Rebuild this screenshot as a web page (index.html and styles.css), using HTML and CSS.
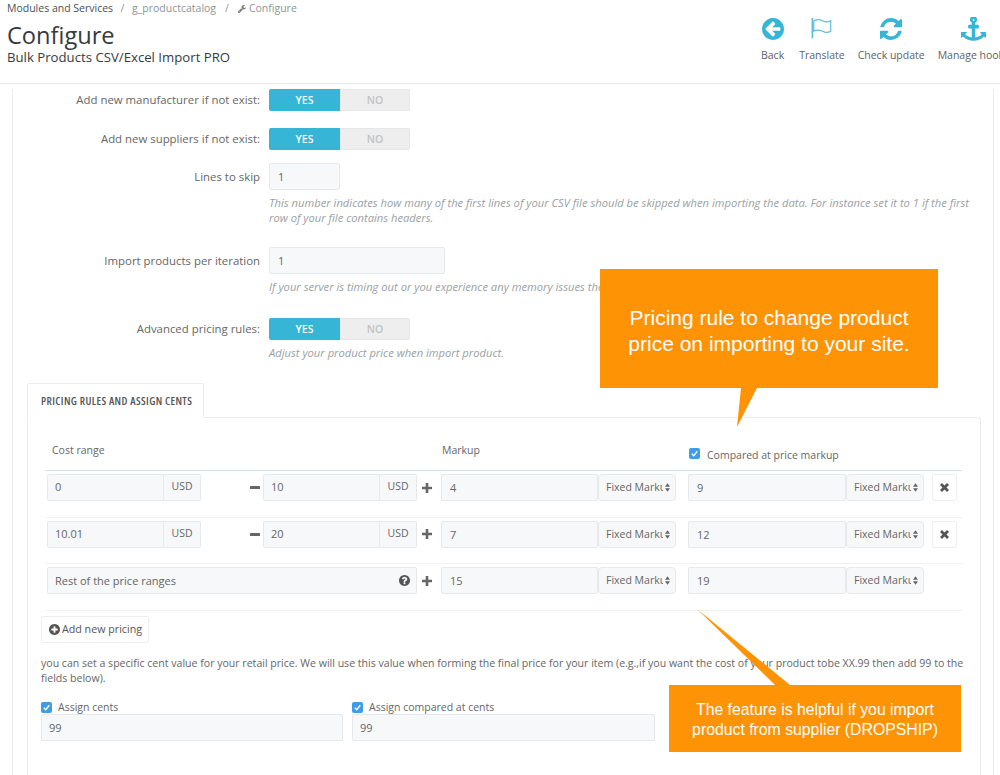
FILE: index.html
```html
<!DOCTYPE html>
<html lang="en">
<head>
<meta charset="utf-8">
<title>Configure</title>
<link rel="stylesheet" href="styles.css">
</head>
<body>
<svg class="defs" width="0" height="0" aria-hidden="true">
  <defs>
    <symbol id="i-back" viewBox="128 128 1536 1536"><path d="M1408 960v-128q0-26-18.500-45t-45.500-19h-502l189-189q19-19 19-45t-19-45l-91-91q-18-18-45-18t-45 18l-362 362-91 91q-18 18-18 45t18 45l91 91 362 362q18 18 45 18t45-18l91-91q18-18 18-45t-18-45l-189-189h502q26 0 45-19t19-45zm256-64q0 209-103 385.500t-279.500 279.500-385.500 103-385.500-103-279.500-279.500-103-385.500 103-385.500 279.500-279.500 385.500-103 385.500 103 279.500 279.500 103 385.500z"/></symbol>
    <symbol id="i-refresh" viewBox="128 128 1536 1536"><path d="M1639 1056q0 5-1 7-64 268-268 434.500t-478 166.500q-146 0-282.500-55t-243.500-157l-129 129q-19 19-45 19t-45-19-19-45v-448q0-26 19-45t45-19h448q26 0 45 19t19 45-19 45l-137 137q71 66 161 102t187 36q134 0 250-65t186-179q11-17 53-117 8-23 30-23h192q13 0 22.500 9.500t9.500 22.500zm25-800v448q0 26-19 45t-45 19h-448q-26 0-45-19t-19-45 19-45l138-138q-148-137-349-137-134 0-250 65t-186 179q-11 17-53 117-8 23-30 23h-199q-13 0-22.500-9.500t-9.500-22.500v-7q65-268 270-434.500t480-166.500q146 0 284 55.500t245 156.500l130-129q19-19 45-19t45 19 19 45z"/></symbol>
    <symbol id="i-anchor" viewBox="0 128 1792 1536"><path d="M960 256q0-26-19-45t-45-19-45 19-19 45 19 45 45 19 45-19 19-45zm832 888v352q0 22-20 30-8 2-12 2-12 0-23-9l-93-93q-119 143-318.500 226.500t-429.500 83.500-429.500-83.500-318.500-226.500l-93 93q-9 9-23 9-4 0-12-2-20-8-20-30v-352q0-14 9-23t23-9h352q22 0 30 20 8 19-7 35l-100 100q67 91 189.500 153.500t271.500 82.500v-647h-192q-26 0-45-19t-19-45v-128q0-26 19-45t45-19h192v-163q-58-34-93-92.500t-35-128.500q0-106 75-181t181-75 181 75 75 181q0 70-35 128.500t-93 92.500v163h192q26 0 45 19t19 45v128q0 26-19 45t-45 19h-192v647q149-20 271.500-82.500t189.500-153.500l-100-100q-15-16-7-35 8-20 30-20h352q14 0 23 9t9 23z"/></symbol>
    <symbol id="i-wrench" viewBox="128 128 1600 1600"><path d="M448 1472q0-26-19-45t-45-19-45 19-19 45 19 45 45 19 45-19 19-45zm644-420l-682 682q-37 37-90 37-52 0-91-37l-106-108q-38-36-38-90 0-53 38-91l681-681q39 98 114.500 173.500t173.500 114.500zm634-435q0 39-23 106-47 134-164.500 217.500t-258.500 83.500q-185 0-316.500-131.500t-131.500-316.500 131.500-316.500 316.500-131.500q58 0 121.500 16.500t107.500 46.500q16 11 16 28t-16 28l-293 169v224l193 107q5-3 79-48.500t135.500-81 70.500-35.500q15 0 23.500 10t8.500 25z"/></symbol>
    <symbol id="i-help" viewBox="128 128 1536 1536"><path d="M1024 1376v-192q0-14-9-23t-23-9h-192q-14 0-23 9t-9 23v192q0 14 9 23t23 9h192q14 0 23-9t9-23zm256-672q0-88-55.500-163t-138.500-116-170-41q-243 0-371 213-15 24 8 42l132 100q7 6 19 6 16 0 25-12 53-68 86-92 34-24 86-24 48 0 85.500 26t37.500 59q0 38-20 61t-68 45q-63 28-115.500 86.500t-52.500 125.500v36q0 14 9 23t23 9h192q14 0 23-9t9-23q0-19 21.500-49.500t54.500-49.500q32-18 49-28.500t46-35 44.500-48 28-60.500 12.500-81zm384 192q0 209-103 385.500t-279.500 279.500-385.500 103-385.500-103-279.500-279.500-103-385.500 103-385.500 279.500-279.500 385.500-103 385.500 103 279.500 279.500 103 385.500z"/></symbol>
    <symbol id="i-add" viewBox="128 128 1536 1536"><path d="M1344 960v-128q0-26-19-45t-45-19h-256v-256q0-26-19-45t-45-19h-128q-26 0-45 19t-19 45v256h-256q-26 0-45 19t-19 45v128q0 26 19 45t45 19h256v256q0 26 19 45t45 19h128q26 0 45-19t19-45v-256h256q26 0 45-19t19-45zm320-64q0 209-103 385.500t-279.500 279.500-385.500 103-385.500-103-279.500-279.500-103-385.500 103-385.500 279.500-279.500 385.500-103 385.500 103 279.500 279.500 103 385.500z"/></symbol>
    <symbol id="i-plus" viewBox="0 0 10 10"><path d="M3.700 0h2.600v3.700H10v2.600H6.300V10H3.700V6.300H0V3.700h3.700z"/></symbol>
    <symbol id="i-minus" viewBox="0 0 10 3"><rect width="10" height="3" rx=".5"/></symbol>
    <symbol id="i-times" viewBox="0 0 10 10"><path d="M2.200 0 5 2.800 7.800 0 10 2.200 7.200 5 10 7.800 7.800 10 5 7.200 2.200 10 0 7.800 2.800 5 0 2.200z"/></symbol>
    <symbol id="i-sort" viewBox="0 0 6 10"><path d="M3 0 6 4H0zM3 10 0 6h6z"/></symbol>
    <symbol id="i-check" viewBox="0 0 11 11"><rect width="11" height="11" rx="2" fill="#3f9ce8"/><path d="M2.800 5.700 4.800 7.700 8.300 3.300" fill="none" stroke="#fff" stroke-width="1.400"/></symbol>
  </defs>
</svg>

<header class="page-head">
  <div class="head-left">
    <nav class="crumbs">
      <span class="crumb-root">Modules and Services</span>
      <span>/</span>
      <span>g_productcatalog</span>
      <span class="crumb-sep-2">/</span>
      <span class="crumb-now"><svg class="ic-wrench"><use href="#i-wrench"/></svg>Configure</span>
    </nav>
    <h1 class="title">Configure</h1>
    <h2 class="subtitle">Bulk Products CSV/Excel Import PRO</h2>
  </div>
  <div class="toolbar">
    <a class="tool tool-back"><svg class="tool-ic"><use href="#i-back"/></svg><span>Back</span></a>
    <a class="tool"><svg class="tool-ic flag" viewBox="0 0 24 24"><path d="M1.500 0v22" stroke-width="1.800"/><path d="M3 3c3.500-2 6.500-1.500 9.500 0s6 1.800 9 0v11.500c-3 1.800-6 1.500-9 0s-6-2-9.500 0z" stroke-width="1.300"/></svg><span>Translate</span></a>
    <a class="tool"><svg class="tool-ic"><use href="#i-refresh"/></svg><span>Check update</span></a>
    <a class="tool"><svg class="tool-ic anchor"><use href="#i-anchor"/></svg><span>Manage hooks</span></a>
  </div>
</header>

<main class="panel">
  <div class="form-row sw-first">
    <label class="form-label">Add new manufacturer if not exist:</label>
    <div class="switch"><span class="on">YES</span><span class="off">NO</span></div>
  </div>
  <div class="form-row sw-next">
    <label class="form-label">Add new suppliers if not exist:</label>
    <div class="switch"><span class="on">YES</span><span class="off">NO</span></div>
  </div>
  <div class="form-row lines-row">
    <label class="form-label">Lines to skip</label>
    <div>
      <div class="field small">1</div>
      <p class="help">This number indicates how many of the first lines of your CSV file should be skipped when importing the data. For instance set it to 1 if the first row of your file contains headers.</p>
    </div>
  </div>
  <div class="form-row iter-row">
    <label class="form-label">Import products per iteration</label>
    <div>
      <div class="field medium">1</div>
      <p class="help">If your server is timing out or you experience any memory issues then lower this number.</p>
    </div>
  </div>
  <div class="form-row adv-row">
    <label class="form-label">Advanced pricing rules:</label>
    <div>
      <div class="switch"><span class="on">YES</span><span class="off">NO</span></div>
      <p class="help">Adjust your product price when import product.</p>
    </div>
  </div>

  <section class="tabs">
    <div class="tab">PRICING RULES AND ASSIGN CENTS</div>
    <div class="pane">
      <div class="rule-head">
        <span class="col-cost">Cost range</span>
        <span class="col-markup">Markup</span>
        <span class="col-compare"><svg class="check"><use href="#i-check"/></svg>Compared at price markup</span>
      </div>

      <div class="rule">
        <div class="group"><div class="g-val">0</div><div class="g-add">USD</div></div>
        <span class="op op-minus"><svg class="ic-minus"><use href="#i-minus"/></svg></span>
        <div class="group"><div class="g-val">10</div><div class="g-add">USD</div></div>
        <span class="op"><svg class="ic-plus"><use href="#i-plus"/></svg></span>
        <div class="field rate">4</div>
        <div class="pick"><span class="pick-text">Fixed Markup</span><svg class="ic-sort"><use href="#i-sort"/></svg></div>
        <div class="field rate rate2">9</div>
        <div class="pick"><span class="pick-text">Fixed Markup</span><svg class="ic-sort"><use href="#i-sort"/></svg></div>
        <button class="del"><svg class="ic-times"><use href="#i-times"/></svg></button>
      </div>

      <div class="rule">
        <div class="group"><div class="g-val">10.01</div><div class="g-add">USD</div></div>
        <span class="op op-minus"><svg class="ic-minus"><use href="#i-minus"/></svg></span>
        <div class="group"><div class="g-val">20</div><div class="g-add">USD</div></div>
        <span class="op"><svg class="ic-plus"><use href="#i-plus"/></svg></span>
        <div class="field rate">7</div>
        <div class="pick"><span class="pick-text">Fixed Markup</span><svg class="ic-sort"><use href="#i-sort"/></svg></div>
        <div class="field rate rate2">12</div>
        <div class="pick"><span class="pick-text">Fixed Markup</span><svg class="ic-sort"><use href="#i-sort"/></svg></div>
        <button class="del"><svg class="ic-times"><use href="#i-times"/></svg></button>
      </div>

      <div class="rule">
        <div class="rest"><span>Rest of the price ranges</span><svg class="ic-help"><use href="#i-help"/></svg></div>
        <span class="op"><svg class="ic-plus"><use href="#i-plus"/></svg></span>
        <div class="field rate">15</div>
        <div class="pick"><span class="pick-text">Fixed Markup</span><svg class="ic-sort"><use href="#i-sort"/></svg></div>
        <div class="field rate rate2">19</div>
        <div class="pick"><span class="pick-text">Fixed Markup</span><svg class="ic-sort"><use href="#i-sort"/></svg></div>
      </div>

      <div class="rule-end"></div>

      <button class="add-btn"><svg class="ic-add"><use href="#i-add"/></svg>Add new pricing</button>

      <p class="note">you can set a specific cent value for your retail price. We will use this value when forming the final price for your item (e.g.,if you want the cost of your product tobe XX.99 then add 99 to the fields below).</p>

      <div class="cents">
        <div class="cent-col">
          <div class="cent-label"><svg class="check"><use href="#i-check"/></svg>Assign cents</div>
          <div class="field">99</div>
        </div>
        <div class="cent-col">
          <div class="cent-label"><svg class="check"><use href="#i-check"/></svg>Assign compared at cents</div>
          <div class="field">99</div>
        </div>
      </div>
    </div>
  </section>
</main>

<aside class="callout callout-top">Pricing rule to change product<br>price on importing to your site.</aside>
<aside class="callout callout-bottom">The feature is helpful if you import<br>product from supplier (DROPSHIP)</aside>
</body>
</html>
```

FILE: styles.css
```css
* { box-sizing: border-box; }

html, body {
  margin: 0;
  height: 775px;
  overflow: hidden;
  background: #fff;
}

body {
  position: relative;
  font-family: "Open Sans", "Liberation Sans", sans-serif;
  font-size: 11px;
  line-height: 15px;
  color: #666;
}

.defs { position: absolute; }

/* header */
.page-head {
  display: grid;
  grid-template-columns: 761px 239px;
  height: 84px;
  border-bottom: 1px solid #e9e9e9;
}

.head-left { padding: 1px 0 0 7px; }

.crumbs {
  display: flex;
  gap: 7.500px;
  font-size: 10.500px;
  line-height: 15px;
  color: #8e9498;
}

.crumb-root { color: #4a4f55; }
.crumb-sep-2 { margin-left: 1.500px; }
.crumb-now { display: flex; align-items: center; margin-left: 1.500px; }

.ic-wrench { width: 8px; height: 8px; margin-right: 3px; fill: #777; }

.title {
  margin: 5px 0 0;
  font-size: 23.600px;
  line-height: 29px;
  font-weight: 400;
  color: #363a41;
}

.subtitle {
  margin: -1px 0 0;
  font-size: 13.200px;
  line-height: 17px;
  font-weight: 400;
  color: #363a41;
}

.toolbar {
  display: flex;
  gap: 13px;
  padding-top: 18px;
  white-space: nowrap;
  overflow: hidden;
}

.tool {
  display: flex;
  flex-direction: column;
  align-items: center;
  gap: 8px;
  font-size: 10.500px;
  line-height: 15px;
  color: #5d6369;
}

.tool-back { margin-right: 2px; }

.tool-ic { width: 22px; height: 22px; fill: #36b5d7; }
.tool-ic.flag { fill: none; stroke: #5dbfda; }
.tool-ic.anchor { width: 25px; height: 24px; margin: -1px 0 -1px; }

/* panel */
.panel {
  margin: 0 6px 0 12px;
  padding-left: 14px;
  padding-right: 12px;
  border-left: 1px solid #ececec;
  border-right: 1px solid #ececec;
  height: 691px;
}

.form-row {
  display: grid;
  grid-template-columns: 247px 1fr;
  column-gap: 9px;
  margin-left: -14px;
}

.form-label {
  font-size: 11.400px;
  text-align: right;
  color: #666;
  line-height: 22px;
}

.sw-first { margin-top: 5px; }
.sw-next { margin-top: 17px; }
.lines-row { margin-top: 13px; }
.iter-row { margin-top: 22px; }
.adv-row { margin-top: 24px; }

.lines-row .form-label, .iter-row .form-label { line-height: 28px; }

.switch {
  display: flex;
  width: 141px;
  height: 22px;
  border-radius: 2px;
  font-size: 10.500px;
  font-weight: 600;
  line-height: 22px;
  text-align: center;
}

.on { width: 71px; background: #36b5d7; color: #fff; border-radius: 2px 0 0 2px; }
.off { width: 70px; background: #eeeeee; color: #c2c2c2; border: 1px solid #e6e6e6; line-height: 20px; border-radius: 0 2px 2px 0; }

.field {
  height: 27px;
  padding: 0 8px;
  background: #f6f8f9;
  border: 1px solid #e6e9eb;
  border-radius: 2px;
  font-size: 11px;
  line-height: 25px;
  color: #666;
}

.small { width: 71px; }
.medium { width: 176px; }

.help {
  margin: 5px 0 0;
  font-size: 11.200px;
  line-height: 15px;
  font-style: italic;
  color: #9a9fa3;
  width: 705px;
}

/* tabs */
.tabs { margin-top: 23px; }

.tab {
  width: 177px;
  height: 35px;
  padding: 0 0 0 13px;
  margin-bottom: -1px;
  position: relative;
  background: #fff;
  border: 1px solid #ececec;
  border-bottom-color: #fff;
  border-radius: 2px 2px 0 0;
  font-size: 11px;
  line-height: 33px;
  font-weight: 600;
  font-stretch: 75%;
  letter-spacing: .4px;
  white-space: nowrap;
  color: #555;
}

.pane {
  width: 954px;
  height: 358px;
  padding: 0 18px 0 17px;
  border: 1px solid #ececec;
  border-bottom: 0;
  border-radius: 0 3px 0 0;
}

.rule-head {
  display: grid;
  grid-template-columns: 390px 247px 1fr;
  height: 52px;
  padding: 25px 0 0 7px;
  font-size: 10.500px;
}

.col-compare {
  display: flex;
  align-items: flex-start;
  height: 15px;
  margin-top: 5px;
}

.check { width: 11px; height: 11px; margin-right: 7px; flex: none; }

.rule {
  display: flex;
  height: 46.670px;
  padding: 3px 0 0 2px;
  border-top: 1px solid #f1f1f1;
}

.rule-head + .rule { border-top-color: #cfe3ec; }

.group { display: flex; width: 154px; height: 27px; }

.g-val {
  flex: 1;
  padding-left: 7px;
  background: #f6f8f9;
  border: 1px solid #e6e9eb;
  border-radius: 2px 0 0 2px;
  line-height: 24px;
}

.g-add {
  width: 37px;
  text-align: center;
  background: #f6f8f9;
  border: 1px solid #e6e9eb;
  border-left: 0;
  border-radius: 0 2px 2px 0;
  font-size: 10.500px;
  line-height: 23px;
}

.op {
  display: flex;
  align-items: center;
  justify-content: center;
  width: 20px;
  height: 27px;
  margin-right: 4px;
  fill: #666;
}

.op-minus { width: 62px; margin-right: 0; justify-content: flex-start; padding: 0 0 0 49px; }

.ic-plus { width: 10px; height: 10px; }
.ic-minus { width: 10px; height: 3px; }

.rate { width: 157px; }
.rate2 { width: 158px; margin-left: 12px; }

.pick {
  display: flex;
  align-items: center;
  width: 78px;
  height: 27px;
  padding: 0 5px 0 7px;
  background: #f6f8f9;
  border: 1px solid #e6e9eb;
  border-radius: 4px;
  font-size: 10.500px;
}

.pick-text { flex: 1; overflow: hidden; white-space: nowrap; }
.ic-sort { width: 5px; height: 9px; fill: #666; margin-left: 2px; flex: none; }

.del {
  width: 25px;
  height: 27px;
  margin-left: 8px;
  padding: 0;
  background: #fff;
  border: 1px solid #eeeeee;
  border-radius: 2px;
  fill: #555;
  display: flex;
  align-items: center;
  justify-content: center;
}

.ic-times { width: 9px; height: 9px; }

.rest {
  display: flex;
  align-items: center;
  justify-content: space-between;
  width: 370px;
  height: 27px;
  padding: 0 6px 0 7px;
  background: #f6f8f9;
  border: 1px solid #e6e9eb;
  border-radius: 2px;
}

.ic-help { width: 11px; height: 11px; fill: #555; }

.rule-end { border-top: 1px solid #f1f1f1; }

.add-btn {
  display: flex;
  align-items: center;
  gap: 2px;
  width: 108px;
  height: 27px;
  margin: 5px 0 0 -4px;
  padding: 0 0 0 7px;
  background: #fff;
  border: 1px solid #eeeeee;
  border-radius: 2px;
  font-family: inherit;
  font-size: 10.700px;
  color: #555;
  white-space: nowrap;
}

.ic-add { width: 11px; height: 11px; fill: #555; flex: none; }

.note {
  margin: 13px 0 0 -4px;
  width: 925px;
  font-size: 10.570px;
  line-height: 15px;
}

.cents {
  display: grid;
  grid-template-columns: 302px 303px;
  column-gap: 9px;
  margin: 16px 0 0 -4px;
}

.cent-label {
  display: flex;
  align-items: center;
  height: 12px;
  font-size: 10.500px;
}

.cent-label .check { margin-right: 6px; }

.cent-col .field { padding: 0 7px; }

/* annotations over the page */
.callout {
  position: absolute;
  display: flex;
  align-items: center;
  justify-content: center;
  text-align: center;
  background: #fd9305;
  color: #fff;
  font-family: "Liberation Sans", Arial, sans-serif;
}

.callout::after {
  content: "";
  position: absolute;
  background: #fd9305;
}

.callout-top {
  left: 600px;
  top: 269px;
  width: 338px;
  height: 119px;
  font-size: 21px;
  line-height: 26px;
  padding-top: 5px;
}

.callout-top::after {
  left: 137px;
  top: 119px;
  width: 20px;
  height: 39px;
  clip-path: polygon(4px 0, 20px 0, 0 39px);
}

.callout-bottom {
  left: 669px;
  top: 685px;
  width: 292px;
  height: 67px;
  font-size: 15.800px;
  line-height: 20px;
  padding-top: 3px;
}

.callout-bottom::after {
  left: 28px;
  top: -76px;
  width: 93px;
  height: 76px;
  clip-path: polygon(0 0, 93px 76px, 78px 76px);
}
```
